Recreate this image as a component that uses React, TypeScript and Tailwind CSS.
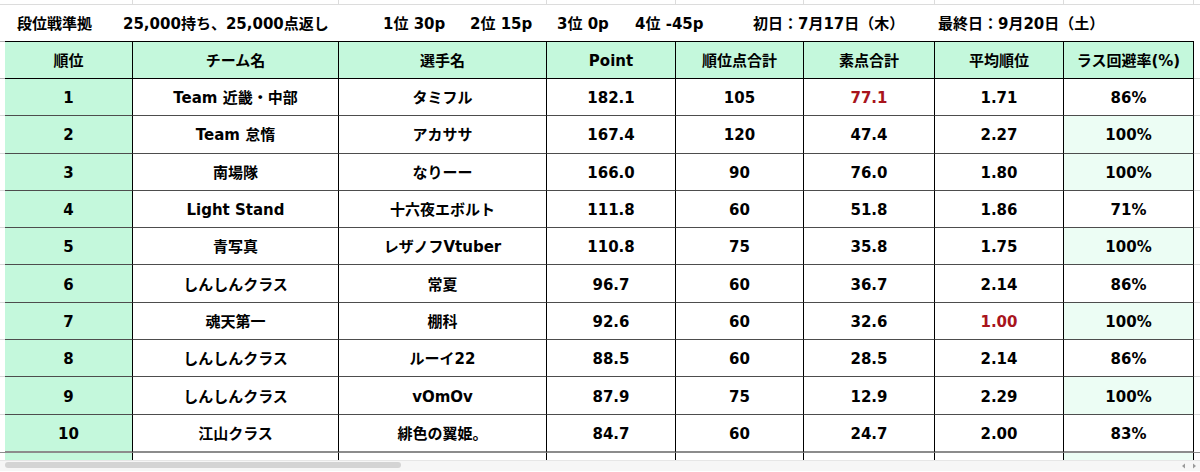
import React from 'react';

type Row = {
  rank: string;
  team: string;
  player: string;
  point: string;
  rankPts: string;
  raw: string;
  avg: string;
  avoid: string;
  rawRed?: boolean;
  avgRed?: boolean;
};

const rows: Row[] = [
  { rank: '1', team: 'Team 近畿・中部', player: 'タミフル', point: '182.1', rankPts: '105', raw: '77.1', avg: '1.71', avoid: '86%', rawRed: true },
  { rank: '2', team: 'Team 怠惰', player: 'アカササ', point: '167.4', rankPts: '120', raw: '47.4', avg: '2.27', avoid: '100%' },
  { rank: '3', team: '南場隊', player: 'なりーー', point: '166.0', rankPts: '90', raw: '76.0', avg: '1.80', avoid: '100%' },
  { rank: '4', team: 'Light Stand', player: '十六夜エボルト', point: '111.8', rankPts: '60', raw: '51.8', avg: '1.86', avoid: '71%' },
  { rank: '5', team: '青写真', player: 'レザノフVtuber', point: '110.8', rankPts: '75', raw: '35.8', avg: '1.75', avoid: '100%' },
  { rank: '6', team: 'しんしんクラス', player: '常夏', point: '96.7', rankPts: '60', raw: '36.7', avg: '2.14', avoid: '86%' },
  { rank: '7', team: '魂天第一', player: '棚科', point: '92.6', rankPts: '60', raw: '32.6', avg: '1.00', avoid: '100%', avgRed: true },
  { rank: '8', team: 'しんしんクラス', player: 'ルーイ22', point: '88.5', rankPts: '60', raw: '28.5', avg: '2.14', avoid: '86%' },
  { rank: '9', team: 'しんしんクラス', player: 'vOmOv', point: '87.9', rankPts: '75', raw: '12.9', avg: '2.29', avoid: '100%' },
  { rank: '10', team: '江山クラス', player: '緋色の翼姫。', point: '84.7', rankPts: '60', raw: '24.7', avg: '2.00', avoid: '83%' },
];

const headers = ['順位', 'チーム名', '選手名', 'Point', '順位点合計', '素点合計', '平均順位', 'ラス回避率(%)'];

// spreadsheet columns, with a thin gutter on either side
const cols = 'grid grid-cols-[5px_128px_206px_208px_129px_128px_131px_129px_130px_6px]';

function Gutter({ line = 'border-[#d9d9d9]' }: { line?: string }) {
  return <div className={`border-b ${line} bg-white`} />;
}

export default function App() {
  return (
    <div className="relative h-[472px] w-[1200px] overflow-hidden bg-white font-['DejaVu_Sans','Noto_Sans_CJK_JP',sans-serif] font-bold text-black">
      {/* cut-off row above */}
      <div className={`${cols} h-[5px]`}>
        <div className="border-b border-[#dcdcdc]" />
        {headers.map((h) => (
          <div key={h} className="border-b border-r border-[#dcdcdc]" />
        ))}
        <div className="border-b border-[#dcdcdc]" />
      </div>

      {/* title line */}
      <div className="flex h-[36px] items-center whitespace-nowrap pt-[3px] text-[15px] leading-none">
        <span className="ml-[17px] w-[106px] shrink-0">段位戦準拠</span>
        <span className="w-[260px] shrink-0">25,000持ち、25,000点返し</span>
        <span className="w-[87px] shrink-0">1位 30p</span>
        <span className="w-[87px] shrink-0">2位 15p</span>
        <span className="w-[78px] shrink-0">3位 0p</span>
        <span className="w-[118px] shrink-0">4位 -45p</span>
        <span className="w-[185px] shrink-0">初日：7月17日（木）</span>
        <span className="shrink-0">最終日：9月20日（土）</span>
      </div>

      {/* header */}
      <div className={`${cols} h-[38px] text-[15px]`}>
        <div className="border-y border-[#b5b5b5]" />
        {headers.map((h) => (
          <div
            key={h}
            className="flex items-center justify-center border-y border-r border-black bg-[#c4f8dc] pt-[2px] leading-none"
          >
            {h}
          </div>
        ))}
        <div className="border-b border-[#d9d9d9]" />
      </div>

      {/* body */}
      {rows.map((r, i) => {
        const last = i === rows.length - 1;
        const line = last ? 'border-b-2 border-b-[#8c8c8c]' : 'border-b border-b-[#4d4d4d]';
        const cell = `flex items-center justify-center border-r border-r-black ${line} pt-[3px] leading-none`;
        return (
          <div key={r.rank} className={`${cols} ${last ? 'h-[38.3px]' : 'h-[37.3px]'} text-[15px]`}>
            <Gutter line={last ? 'border-[#8c8c8c]' : 'border-[#d9d9d9]'} />
            <div className={`${cell} bg-[#c4f8dc]`}>{r.rank}</div>
            <div className={cell}>{r.team}</div>
            <div className={cell}>{r.player}</div>
            <div className={cell}>{r.point}</div>
            <div className={cell}>{r.rankPts}</div>
            <div className={`${cell} ${r.rawRed ? 'text-[#a8141c]' : ''}`}>{r.raw}</div>
            <div className={`${cell} ${r.avgRed ? 'text-[#a8141c]' : ''}`}>{r.avg}</div>
            <div className={`${cell} ${r.avoid === '100%' ? 'bg-[#ecfdf4]' : ''}`}>{r.avoid}</div>
            <Gutter line={last ? 'border-[#8c8c8c]' : 'border-[#d9d9d9]'} />
          </div>
        );
      })}

      {/* peek of next row */}
      <div className={`${cols} h-[7px]`}>
        <div />
        <div className="border-r border-black bg-[#c4f8dc]" />
        <div className="border-r border-black" />
        <div className="border-r border-black" />
        <div className="border-r border-black" />
        <div className="border-r border-black" />
        <div className="border-r border-black" />
        <div className="border-r border-black" />
        <div className="border-r border-black bg-[#ecfdf4]" />
        <div />
      </div>

      {/* horizontal scrollbar */}
      <div className="flex h-[11px] items-start border-t border-[#e6e6e6] bg-[#f6f6f6] pl-[5px] pr-[3px] pt-[1px]">
        <div className="h-[6px] w-[396px] rounded-full bg-[#d4d4d4]" />
        <div className="ml-auto flex items-center gap-[6px] pt-[1px]">
          <svg width="5" height="6" viewBox="0 0 5 6">
            <path d="M4 0.5 L1 3 L4 5.5 Z" fill="#9a9a9a" />
          </svg>
          <svg width="5" height="6" viewBox="0 0 5 6">
            <path d="M1 0.5 L4 3 L1 5.5 Z" fill="#9a9a9a" />
          </svg>
        </div>
      </div>
    </div>
  );
}
